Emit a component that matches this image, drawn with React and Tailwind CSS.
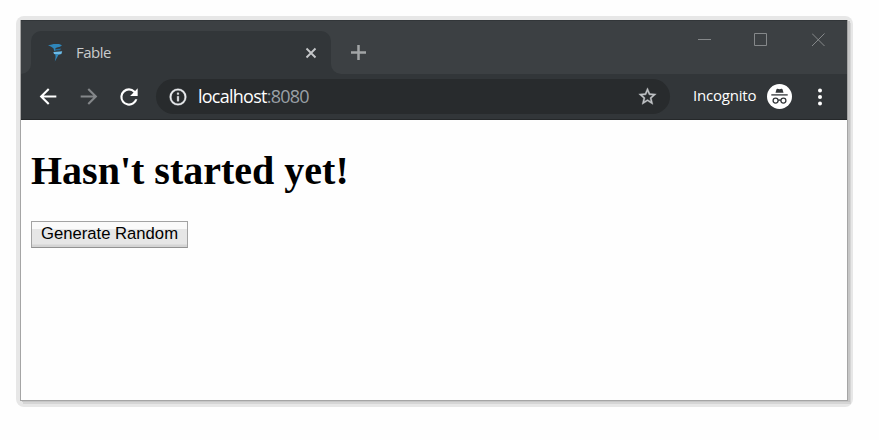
function FableLogo() {
  return (
    <svg width="16" height="18" viewBox="0 0 16 18" className="shrink-0">
      <path d="M0 1.2 3 .8 5.5 0h5.5L14 1.2 12 2.8 9 3.4 7.4 4.2 7.6 6.8 6.4 7.2 5.4 4.2 2.8 2.6Z" fill="#2f86ba" />
      <path d="M7 5.2 13.2 4.6 12 6.2 7 6.6Z" fill="#256b96" />
      <path d="M5.4 8 14.2 7.2 13.4 10 10 10.8 6 10Z" fill="#6bbbe8" />
      <path d="M7.2 10 10.8 10.2 8.8 14 6.8 17.6 7.6 13Z" fill="#2f86ba" />
    </svg>
  );
}

function Incognito() {
  return (
    <svg width="25" height="25" viewBox="0 0 25 25" className="ml-[11px] shrink-0">
      <circle cx="12.5" cy="12.5" r="12.5" fill="#fff" />
      <path d="M8.5 8.7 9.5 5.2q.2-.6.9-.4l2.1.5 2.1-.5q.7-.2.9.4l1 3.5Z" fill="#323639" />
      <path d="M4.3 10.9h16.4" stroke="#323639" strokeWidth="1.3" />
      <g fill="none" stroke="#323639" strokeWidth="1.3">
        <circle cx="8.6" cy="16.6" r="2.5" />
        <circle cx="16.4" cy="16.6" r="2.5" />
        <path d="M11.1 16.4q1.4-.8 2.8 0" />
      </g>
    </svg>
  );
}

function TabStrip() {
  return (
    <div className="flex h-[54px] items-start justify-between bg-[#3c4043] border-t border-[#323639]">
      <div className="flex items-end pt-[10px]">
        <div className="h-[43px] w-[10px] bg-[#323639]">
          <div className="h-full rounded-br-[10px] bg-[#3c4043]" />
        </div>
        <div className="flex h-[43px] w-[300px] items-center rounded-t-[10px] bg-[#323639] pl-[17px] pr-[11px]">
          <FableLogo />
          <span className="ml-3 pb-[2px] font-['Open_Sans',sans-serif] text-[15px] leading-5 tracking-[-0.5px] text-[#c9cbcd]">Fable</span>
          <svg width="18" height="18" viewBox="0 0 18 18" className="ml-auto">
            <path d="m4.5 4.5 9 9m0-9-9 9" stroke="#c5c7c9" strokeWidth="1.9" />
          </svg>
        </div>
        <div className="h-[43px] w-[10px] bg-[#323639]">
          <div className="h-full rounded-bl-[10px] bg-[#3c4043]" />
        </div>
        <svg width="17" height="17" viewBox="0 0 17 17" className="mb-[13px] ml-[9px]">
          <path d="M8.5 1v15M1 8.5h15" stroke="#a2a5a7" strokeWidth="2.5" />
        </svg>
      </div>
      <div className="flex pr-[21px] pt-[12px]">
        <svg width="14" height="14" viewBox="0 0 14 14"><path d="M0 6.5h13" stroke="#85888a" /></svg>
        <svg width="14" height="14" viewBox="0 0 14 14" className="ml-[42px]"><path d="M.5.5h12v12H.5Z" fill="none" stroke="#85888a" /></svg>
        <svg width="14" height="14" viewBox="0 0 14 14" className="ml-[44px]"><path d="m0 .5 12.5 12.5M12.5.5 0 13" stroke="#85888a" /></svg>
      </div>
    </div>
  );
}

function Toolbar() {
  return (
    <div className="flex h-[46px] items-center border-b border-[#25282a] bg-[#323639] pl-[14px]">
      <svg width="26" height="25" viewBox="0 0 24 24" fill="#fff">
        <path d="M20 11H7.83l5.59-5.59L12 4l-8 8 8 8 1.41-1.41L7.83 13H20v-2z" />
      </svg>
      <svg width="26" height="25" viewBox="0 0 24 24" fill="#84878a" className="ml-[15px]">
        <path d="M12 4l-1.41 1.41L16.17 11H4v2h12.17l-5.58 5.59L12 20l8-8z" />
      </svg>
      <svg width="26" height="26" viewBox="0 0 24 24" fill="#fff" className="ml-[14px]">
        <path d="M17.65 6.35A7.96 7.96 0 0 0 12 4a8 8 0 1 0 7.73 10h-2.08A6 6 0 1 1 12 6c1.66 0 3.14.69 4.22 1.78L13 11h7V4l-2.35 2.35z" />
      </svg>
      <div className="ml-[14px] flex h-[35px] w-[514px] items-center rounded-full bg-[#282b2d] pl-[12px] pr-[12px]">
        <svg width="20" height="20" viewBox="0 0 24 24" fill="#e8eaed">
          <path d="M11 7h2v2h-2zm0 4h2v6h-2zm1-9a10 10 0 1 0 0 20 10 10 0 0 0 0-20zm0 18a8 8 0 1 1 0-16 8 8 0 0 1 0 16z" stroke="#e8eaed" strokeWidth=".4" />
        </svg>
        <span className="ml-[10px] pb-[2px] font-['Open_Sans',sans-serif] text-[18px] leading-6 tracking-[-0.75px] text-white">
          localhost<span className="text-[#9aa0a6]">:8080</span>
        </span>
        <svg width="21" height="21" viewBox="0 0 24 24" fill="#c0c3c6" className="ml-auto">
          <path d="M22 9.24l-7.19-.62L12 2 9.19 8.63 2 9.24l5.46 4.73L5.82 21 12 17.27 18.18 21l-1.63-7.03L22 9.24zM12 15.4l-3.76 2.27 1-4.28-3.32-2.88 4.38-.38L12 6.1l1.71 4.04 4.38.38-3.32 2.88 1 4.28L12 15.4z" stroke="#c0c3c6" strokeWidth=".4" />
        </svg>
      </div>
      <span className="ml-[23px] w-[63px] whitespace-nowrap pb-[3px] font-['Open_Sans',sans-serif] text-[15px] leading-5 tracking-[-0.2px] text-white">Incognito</span>
      <Incognito />
      <svg width="6" height="20" viewBox="0 0 6 20" fill="#fff" className="ml-[25px]">
        <circle cx="3" cy="3.5" r="2" /><circle cx="3" cy="10" r="2" /><circle cx="3" cy="16.5" r="2" />
      </svg>
    </div>
  );
}

export default function App() {
  return (
    <div className="h-[440px] w-[879px] bg-[#fefefe] pl-4 pt-4">
      <div className="h-[391px] w-[837px] rounded-[8px] bg-[#e7e7e7] pl-1 pt-1">
        <div className="flex h-[381px] w-[828px] flex-col border-b border-l border-r border-[#a5a5a5] bg-[#fefefe] shadow-[2px_1px_0_0_#c6c6c6,3px_3px_0_0_#d5d5d5]">
          <TabStrip />
          <Toolbar />
          <main className="pl-[10px] pt-[27px]">
            <h1 className="whitespace-nowrap font-['Liberation_Serif',serif] text-[40px] font-bold leading-[47px] text-black">Hasn't started yet!</h1>
            <button className="mt-[27px] flex h-[27px] w-[157px] items-center justify-center whitespace-nowrap border border-[#a3a3a3] border-b-[#929292] bg-[linear-gradient(to_bottom,#fafafa_0,#fafafa_7px,#e6e6e6_7px,#e6e6e6_22px,#d4d4d4_23px)] pb-[2px] font-['Liberation_Sans',sans-serif] text-[16.67px] text-black">Generate Random</button>
          </main>
        </div>
      </div>
    </div>
  );
}
